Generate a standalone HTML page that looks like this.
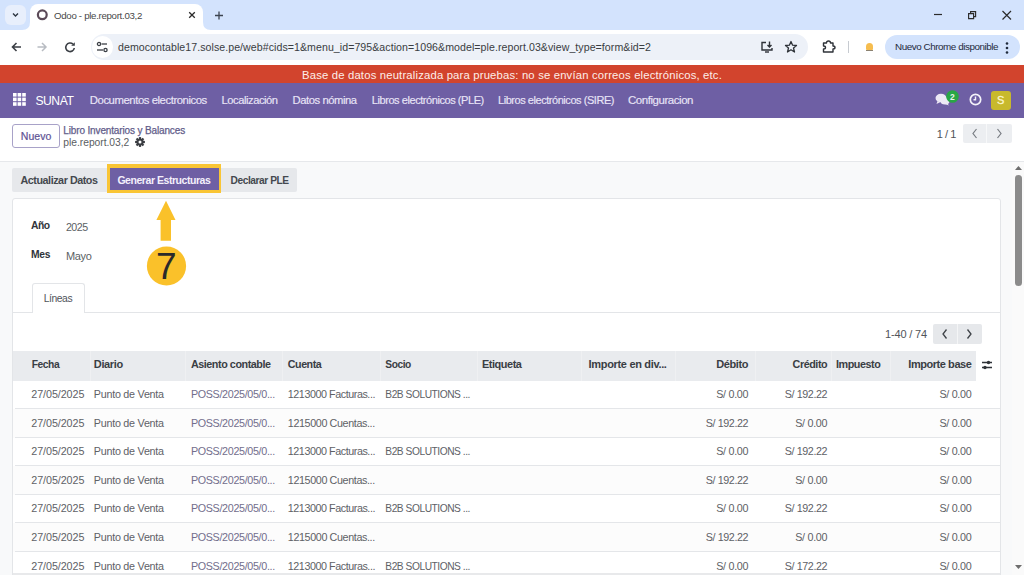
<!DOCTYPE html>
<html><head><meta charset="utf-8"><title>Odoo - ple.report.03,2</title>
<style>
*{margin:0;padding:0;box-sizing:border-box}
html,body{width:1024px;height:575px;overflow:hidden;background:#fff;font-family:"Liberation Sans",sans-serif;position:relative}
.a{position:absolute}
.t{position:absolute;white-space:nowrap}
</style></head><body>
<div class="a" style="left:0px;top:0px;width:1024px;height:30px;background:#d3e3fd;"></div>
<div class="a" style="left:5px;top:5px;width:21px;height:20px;background:#e8effc;border-radius:6px"></div>
<svg class="a" style="left:10px;top:10px" width="11" height="10" viewBox="0 0 11 10"><path d="M3 3.5 L5.5 6 L8 3.5" fill="none" stroke="#2d3540" stroke-width="1.4"/></svg>
<div class="a" style="left:30px;top:4px;width:173px;height:26px;background:#fff;border-radius:8px 8px 0 0"></div>
<svg class="a" style="left:22px;top:22px" width="8" height="8" viewBox="0 0 8 8"><path d="M0 8 Q8 8 8 0 L8 8 Z" fill="#fff"/></svg>
<svg class="a" style="left:203px;top:22px" width="8" height="8" viewBox="0 0 8 8"><path d="M8 8 Q0 8 0 0 L0 8 Z" fill="#fff"/></svg>
<svg class="a" style="left:36px;top:9px" width="13" height="12" viewBox="0 0 13 12"><circle cx="6.3" cy="5.8" r="4.4" fill="none" stroke="#5b4a58" stroke-width="2.2"/></svg>
<svg class="a" style="left:187px;top:10px" width="10" height="10" viewBox="0 0 10 10"><path d="M2.2 2.2 L7.8 7.8 M7.8 2.2 L2.2 7.8" stroke="#2a2a2a" stroke-width="1.3"/></svg>
<svg class="a" style="left:213px;top:10px" width="12" height="11" viewBox="0 0 12 11"><path d="M6 1.5 V9.5 M2 5.5 H10" stroke="#3c4450" stroke-width="1.3"/></svg>
<svg class="a" style="left:932px;top:10px" width="12" height="10" viewBox="0 0 12 10"><path d="M2 4.5 H10" stroke="#2b2b2b" stroke-width="1.2"/></svg>
<svg class="a" style="left:966px;top:9px" width="12" height="12" viewBox="0 0 12 12"><path d="M2.6 4.6 H7.6 V9.6 H2.6 Z M4.6 4.6 V2.6 H9.6 V7.6 H7.6" fill="none" stroke="#2b2b2b" stroke-width="1.15"/></svg>
<svg class="a" style="left:1001px;top:10px" width="12" height="10" viewBox="0 0 12 10"><path d="M1.5 1 L10 9.5 M10 1 L1.5 9.5" stroke="#2b2b2b" stroke-width="1.2"/></svg>
<div class="a" style="left:0px;top:30px;width:1024px;height:34px;background:#fff;"></div>
<svg class="a" style="left:10px;top:41px" width="13" height="12" viewBox="0 0 13 12"><path d="M11 6 H2.5 M6.5 2 L2.5 6 L6.5 10" fill="none" stroke="#3b3f45" stroke-width="1.6"/></svg>
<svg class="a" style="left:36px;top:41px" width="13" height="12" viewBox="0 0 13 12"><path d="M1.5 6 H10 M6 2 L10 6 L6 10" fill="none" stroke="#b8bcc2" stroke-width="1.5"/></svg>
<svg class="a" style="left:64px;top:41px" width="13" height="13" viewBox="0 0 13 13"><path d="M10.3 7 A4.3 4.3 0 1 1 9 3.2" fill="none" stroke="#3b3f45" stroke-width="1.6"/><path d="M10.8 1.2 V4.8 H7.2 Z" fill="#3b3f45"/></svg>
<div class="a" style="left:91px;top:34px;width:717px;height:26px;background:#edf1f8;border-radius:13px"></div>
<div class="a" style="left:92px;top:36px;width:21px;height:22px;background:#fff;border-radius:11px"></div>
<svg class="a" style="left:95px;top:40px" width="15" height="14" viewBox="0 0 15 14"><circle cx="4" cy="4" r="1.6" fill="none" stroke="#3b3f45" stroke-width="1.3"/><path d="M6.5 4 H12" stroke="#3b3f45" stroke-width="1.3"/><circle cx="10.5" cy="10" r="1.6" fill="none" stroke="#3b3f45" stroke-width="1.3"/><path d="M2 10 H8" stroke="#3b3f45" stroke-width="1.3"/></svg>
<svg class="a" style="left:760px;top:40px" width="15" height="14" viewBox="0 0 15 14"><path d="M6 2.5 H2 V10 H12 V8" fill="none" stroke="#2e3238" stroke-width="1.4"/><path d="M9.5 1.5 V7 M7.5 5 L9.5 7 L11.5 5" fill="none" stroke="#2e3238" stroke-width="1.4"/><path d="M5 12 H9" stroke="#2e3238" stroke-width="1.4"/></svg>
<svg class="a" style="left:784px;top:40px" width="14" height="14" viewBox="0 0 14 14"><path d="M7 1.5 L8.6 5.2 L12.5 5.5 L9.5 8 L10.5 12 L7 9.8 L3.5 12 L4.5 8 L1.5 5.5 L5.4 5.2 Z" fill="none" stroke="#2e3238" stroke-width="1.3" stroke-linejoin="round"/></svg>
<svg class="a" style="left:821px;top:40px" width="16" height="14" viewBox="0 0 16 14"><path d="M2.5 3 H5.5 Q5.5 1 7.5 1 Q9.5 1 9.5 3 H12 V6 Q14 6 14 7.5 Q14 9 12 9 V12 H2.5 V9 Q4.5 9 4.5 7.5 Q4.5 6 2.5 6 Z" fill="none" stroke="#2e3238" stroke-width="1.4" stroke-linejoin="round"/></svg>
<div class="a" style="left:848px;top:41px;width:1px;height:12px;background:#c7cbd1;"></div>
<div class="a" style="left:865.5px;top:42.5px;width:7px;height:7px;background:#f6bd4f;border-radius:3.5px 3.5px 1px 1px"></div>
<div class="a" style="left:865.5px;top:50.2px;width:7px;height:1.2px;background:#8c8270;"></div>
<div class="a" style="left:885px;top:35px;width:135px;height:24px;background:#d3e3fd;border-radius:12px"></div>
<svg class="a" style="left:1004px;top:41px" width="6" height="14" viewBox="0 0 6 14"><circle cx="3" cy="2.5" r="1.3" fill="#1f2a3c"/><circle cx="3" cy="7" r="1.3" fill="#1f2a3c"/><circle cx="3" cy="11.5" r="1.3" fill="#1f2a3c"/></svg>
<div class="a" style="left:0px;top:64.5px;width:1024px;height:18.7px;background:#d2442d;"></div>
<div class="a" style="left:0px;top:83px;width:1024px;height:35px;background:#6e5fa4;"></div>
<svg class="a" style="left:13px;top:93px" width="14" height="14" viewBox="0 0 14 14"><rect x="0.0" y="0.0" width="3.6" height="3.6" fill="#fff"/><rect x="0.0" y="4.6" width="3.6" height="3.6" fill="#fff"/><rect x="0.0" y="9.2" width="3.6" height="3.6" fill="#fff"/><rect x="4.6" y="0.0" width="3.6" height="3.6" fill="#fff"/><rect x="4.6" y="4.6" width="3.6" height="3.6" fill="#fff"/><rect x="4.6" y="9.2" width="3.6" height="3.6" fill="#fff"/><rect x="9.2" y="0.0" width="3.6" height="3.6" fill="#fff"/><rect x="9.2" y="4.6" width="3.6" height="3.6" fill="#fff"/><rect x="9.2" y="9.2" width="3.6" height="3.6" fill="#fff"/></svg>
<svg class="a" style="left:935px;top:93px" width="16" height="13" viewBox="0 0 16 13"><ellipse cx="6" cy="5" rx="5.5" ry="4.3" fill="#ece9f5"/><path d="M2.5 8 L1.5 11 L5.5 9 Z" fill="#ece9f5"/><ellipse cx="10" cy="8" rx="4.5" ry="3.5" fill="#ece9f5"/><path d="M12.5 10.5 L14 12.5 L10 11 Z" fill="#ece9f5"/></svg>
<svg class="a" style="left:946px;top:90px" width="13" height="13" viewBox="0 0 13 13"><circle cx="6.5" cy="6.5" r="6.3" fill="#28a745"/></svg>
<svg class="a" style="left:969px;top:93px" width="13" height="13" viewBox="0 0 13 13"><circle cx="6.5" cy="6.5" r="5.2" fill="none" stroke="#f4f2fa" stroke-width="1.7"/><path d="M6.5 3.5 V6.8 H4.5" fill="none" stroke="#f4f2fa" stroke-width="1.4"/></svg>
<div class="a" style="left:991px;top:90.5px;width:19.5px;height:19.5px;background:#c8b92c;border-radius:3px"></div>
<div class="a" style="left:0px;top:118px;width:1024px;height:43px;background:#fff;"></div>
<div class="a" style="left:0px;top:161px;width:1024px;height:1px;background:#e6e8eb;"></div>
<div class="a" style="left:12px;top:124px;width:48px;height:24px;background:#fff;border:1px solid #a8a2c8;border-radius:3px"></div>
<svg class="a" style="left:135px;top:137.3px" width="10" height="10" viewBox="0 0 10 10"><g transform="translate(5 5)"><rect x="-1.1" y="-4.9" width="2.2" height="9.8" fill="#3a3d42" transform="rotate(0)"/><rect x="-1.1" y="-4.9" width="2.2" height="9.8" fill="#3a3d42" transform="rotate(45)"/><rect x="-1.1" y="-4.9" width="2.2" height="9.8" fill="#3a3d42" transform="rotate(90)"/><rect x="-1.1" y="-4.9" width="2.2" height="9.8" fill="#3a3d42" transform="rotate(135)"/><circle r="3.6" fill="#3a3d42"/><circle r="1.5" fill="#fff"/></g></svg>
<div class="a" style="left:963px;top:124px;width:48.5px;height:18.5px;background:#eceef1;border-radius:2px"></div>
<div class="a" style="left:986px;top:124px;width:1px;height:18.5px;background:#f7f8f9;"></div>
<svg class="a" style="left:970px;top:127px" width="10" height="13" viewBox="0 0 10 13"><path d="M6.5 2 L3 6.5 L6.5 11" fill="none" stroke="#767a80" stroke-width="1.2"/></svg>
<svg class="a" style="left:994px;top:127px" width="10" height="13" viewBox="0 0 10 13"><path d="M3.5 2 L7 6.5 L3.5 11" fill="none" stroke="#767a80" stroke-width="1.2"/></svg>
<div class="a" style="left:0px;top:162px;width:1012px;height:413px;background:#f8f9fa;"></div>
<div class="a" style="left:12px;top:168px;width:95px;height:24px;background:#e6e8eb;border-radius:2px 0 0 2px"></div>
<div class="a" style="left:107px;top:164px;width:114px;height:29px;background:#f9c535;"></div>
<div class="a" style="left:110px;top:167.5px;width:108.5px;height:22.5px;background:#6e5fa4;"></div>
<div class="a" style="left:221px;top:168px;width:76px;height:24px;background:#e6e8eb;border-radius:0 2px 2px 0"></div>
<div class="a" style="left:12px;top:198px;width:989px;height:400px;background:#fff;border:1px solid #e3e5e8;border-radius:3px"></div>
<div class="a" style="left:13px;top:311.5px;width:987px;height:1px;background:#e3e5e8;"></div>
<div class="a" style="left:32px;top:283px;width:53px;height:29.5px;background:#fff;border:1px solid #e3e5e8;border-bottom:none;border-radius:3px 3px 0 0"></div>
<svg class="a" style="left:146px;top:199px" width="42" height="88" viewBox="0 0 42 88"><path d="M20 1.8 L29.5 21 L25 21 L25 41.8 L14.6 41.8 L14.6 21 L10.4 21 Z" fill="#fac12a"/><circle cx="20.5" cy="67" r="19.6" fill="#fac12a"/></svg>
<div class="a" style="left:933px;top:324px;width:48.5px;height:19.5px;background:#e6e8eb;border-radius:2px"></div>
<div class="a" style="left:957px;top:324px;width:1px;height:19.5px;background:#f4f5f6;"></div>
<svg class="a" style="left:940px;top:327px" width="10" height="14" viewBox="0 0 10 14"><path d="M6.5 2.5 L3 7 L6.5 11.5" fill="none" stroke="#3e4247" stroke-width="1.3"/></svg>
<svg class="a" style="left:964px;top:327px" width="10" height="14" viewBox="0 0 10 14"><path d="M3.5 2.5 L7 7 L3.5 11.5" fill="none" stroke="#3e4247" stroke-width="1.3"/></svg>
<div class="a" style="left:13px;top:350.5px;width:963px;height:30px;background:#e9ebee;"></div>
<div class="a" style="left:89.5px;top:350.5px;width:1px;height:30px;background:#eff0f2;"></div>
<div class="a" style="left:185px;top:350.5px;width:1px;height:30px;background:#eff0f2;"></div>
<div class="a" style="left:282px;top:350.5px;width:1px;height:30px;background:#eff0f2;"></div>
<div class="a" style="left:380px;top:350.5px;width:1px;height:30px;background:#eff0f2;"></div>
<div class="a" style="left:477px;top:350.5px;width:1px;height:30px;background:#eff0f2;"></div>
<div class="a" style="left:581px;top:350.5px;width:1px;height:30px;background:#eff0f2;"></div>
<div class="a" style="left:675px;top:350.5px;width:1px;height:30px;background:#eff0f2;"></div>
<div class="a" style="left:755px;top:350.5px;width:1px;height:30px;background:#eff0f2;"></div>
<div class="a" style="left:831px;top:350.5px;width:1px;height:30px;background:#eff0f2;"></div>
<div class="a" style="left:890px;top:350.5px;width:1px;height:30px;background:#eff0f2;"></div>
<div class="a" style="left:976px;top:350.5px;width:24px;height:30px;background:#fff;"></div>
<svg class="a" style="left:980px;top:358px" width="14" height="14" viewBox="0 0 14 14"><path d="M2 4.5 H12 M2 9.5 H12" stroke="#2f3338" stroke-width="1.3"/><circle cx="8.5" cy="4.5" r="1.7" fill="#2f3338"/><circle cx="5" cy="9.5" r="1.7" fill="#2f3338"/></svg>
<div class="a" style="left:13px;top:380.5px;width:987px;height:28.55px;background:#fff;"></div>
<div class="a" style="left:13px;top:409.05px;width:987px;height:28.55px;background:#fcfcfc;"></div>
<div class="a" style="left:13px;top:437.6px;width:987px;height:28.55px;background:#fff;"></div>
<div class="a" style="left:13px;top:466.15px;width:987px;height:28.55px;background:#fcfcfc;"></div>
<div class="a" style="left:13px;top:494.7px;width:987px;height:28.55px;background:#fff;"></div>
<div class="a" style="left:13px;top:523.25px;width:987px;height:28.55px;background:#fcfcfc;"></div>
<div class="a" style="left:13px;top:551.8px;width:987px;height:28.55px;background:#fff;"></div>
<div class="a" style="left:14.5px;top:408.05px;width:985.5px;height:1px;background:#e4e6e9;"></div>
<div class="a" style="left:14.5px;top:436.6px;width:985.5px;height:1px;background:#e4e6e9;"></div>
<div class="a" style="left:14.5px;top:465.15px;width:985.5px;height:1px;background:#e4e6e9;"></div>
<div class="a" style="left:14.5px;top:493.7px;width:985.5px;height:1px;background:#e4e6e9;"></div>
<div class="a" style="left:14.5px;top:522.25px;width:985.5px;height:1px;background:#e4e6e9;"></div>
<div class="a" style="left:14.5px;top:550.8px;width:985.5px;height:1px;background:#e4e6e9;"></div>
<div class="a" style="left:14.5px;top:579.35px;width:985.5px;height:1px;background:#e4e6e9;"></div>
<div class="a" style="left:13px;top:573px;width:987px;height:2px;background:#e8e9eb;"></div>
<div class="a" style="left:1012px;top:162px;width:12px;height:413px;background:#fafafa;"></div>
<svg class="a" style="left:1013px;top:164px" width="10" height="8" viewBox="0 0 10 8"><path d="M5.5 2 L9 6 H2 Z" fill="#6e6e6e"/></svg>
<div class="a" style="left:1015px;top:175px;width:7px;height:111px;background:#8b8b8b;border-radius:3.5px"></div>
<svg class="a" style="left:1013px;top:563px" width="10" height="8" viewBox="0 0 10 8"><path d="M5.5 6 L9 2 H2 Z" fill="#6e6e6e"/></svg>
<div class="t" style="left:54.00px;top:11.00px;font-size:9.7px;line-height:9.7px;color:#474747;letter-spacing:-0.308px;">Odoo - ple.report.03,2</div>
<div class="t" style="left:118.00px;top:42.00px;font-size:10.6px;line-height:10.6px;color:#3a3d42;letter-spacing:0.06px;">democontable17.solse.pe/web#cids=1&amp;menu_id=795&amp;action=1096&amp;model=ple.report.03&amp;view_type=form&amp;id=2</div>
<div class="t" style="left:895.00px;top:42.00px;font-size:9.85px;line-height:9.85px;color:#1f2a3c;letter-spacing:-0.446px;">Nuevo Chrome disponible</div>
<div class="t" style="left:302.00px;top:70.00px;font-size:11.3px;line-height:11.3px;color:#fdeee9;letter-spacing:0.171px;">Base de datos neutralizada para pruebas: no se envían correos electrónicos, etc.</div>
<div class="t" style="left:35.40px;top:95.00px;font-size:12.14px;line-height:12.14px;color:#ffffff;letter-spacing:-0.439px;">SUNAT</div>
<div class="t" style="left:89.80px;top:95.00px;font-size:11.34px;line-height:11.34px;color:#e9e5f7;letter-spacing:-0.443px;-webkit-text-stroke:0.15px #e9e5f7;">Documentos electronicos</div>
<div class="t" style="left:221.60px;top:95.00px;font-size:11.16px;line-height:11.16px;color:#e9e5f7;letter-spacing:-0.45px;-webkit-text-stroke:0.15px #e9e5f7;">Localización</div>
<div class="t" style="left:292.60px;top:95.00px;font-size:11.25px;line-height:11.25px;color:#e9e5f7;letter-spacing:-0.451px;-webkit-text-stroke:0.15px #e9e5f7;">Datos nómina</div>
<div class="t" style="left:371.80px;top:95.00px;font-size:11.03px;line-height:11.03px;color:#e9e5f7;letter-spacing:-0.442px;-webkit-text-stroke:0.15px #e9e5f7;">Libros electrónicos (PLE)</div>
<div class="t" style="left:498.00px;top:95.00px;font-size:10.99px;line-height:10.99px;color:#e9e5f7;letter-spacing:-0.446px;-webkit-text-stroke:0.15px #e9e5f7;">Libros electrónicos (SIRE)</div>
<div class="t" style="left:628.00px;top:95.00px;font-size:11.48px;line-height:11.48px;color:#e9e5f7;letter-spacing:-0.444px;-webkit-text-stroke:0.15px #e9e5f7;">Configuracion</div>
<div class="t" style="left:949.94px;top:93.00px;font-size:8.5px;line-height:8.5px;color:#e8f5e9;font-weight:bold;">2</div>
<div class="t" style="left:997.03px;top:95.00px;font-size:11px;line-height:11px;color:#fbf6d0;-webkit-text-stroke:0.3px #fbf6d0;">S</div>
<div class="t" style="left:20.80px;top:131.00px;font-size:10.5px;line-height:10.5px;color:#5d5294;letter-spacing:0.03px;-webkit-text-stroke:0.2px #5d5294;">Nuevo</div>
<div class="t" style="left:63.30px;top:126.00px;font-size:10px;line-height:10px;color:#625d8a;letter-spacing:-0.14px;-webkit-text-stroke:0.25px #625d8a;">Libro Inventarios y Balances</div>
<div class="t" style="left:63.30px;top:138.00px;font-size:10.3px;line-height:10.3px;color:#5a5d62;letter-spacing:-0.027px;">ple.report.03,2</div>
<div class="t" style="left:936.80px;top:129.00px;font-size:11px;line-height:11px;color:#4f5358;letter-spacing:-0.441px;">1 / 1</div>
<div class="t" style="left:20.50px;top:175.00px;font-size:10.75px;line-height:10.75px;color:#44484e;font-weight:bold;letter-spacing:-0.452px;">Actualizar Datos</div>
<div class="t" style="left:117.40px;top:175.00px;font-size:10.5px;line-height:10.5px;color:#f3f0fb;font-weight:bold;letter-spacing:-0.45px;">Generar Estructuras</div>
<div class="t" style="left:230.60px;top:176.00px;font-size:10.18px;line-height:10.18px;color:#44484e;font-weight:bold;letter-spacing:-0.444px;">Declarar PLE</div>
<div class="t" style="left:31.00px;top:221.00px;font-size:10.3px;line-height:10.3px;color:#30343a;font-weight:bold;letter-spacing:-0.439px;">Año</div>
<div class="t" style="left:65.90px;top:222.00px;font-size:10.65px;line-height:10.65px;color:#5b5f64;letter-spacing:-0.443px;">2025</div>
<div class="t" style="left:31.00px;top:250.00px;font-size:10.3px;line-height:10.3px;color:#30343a;font-weight:bold;letter-spacing:-0.244px;">Mes</div>
<div class="t" style="left:66.00px;top:251.00px;font-size:11px;line-height:11px;color:#5b5f64;letter-spacing:-0.35px;">Mayo</div>
<div class="t" style="left:43.80px;top:294.00px;font-size:10.32px;line-height:10.32px;color:#50545a;letter-spacing:-0.444px;">Líneas</div>
<div class="t" style="left:155.91px;top:248.00px;font-size:37px;line-height:37px;color:#2a2a2a;">7</div>
<div class="t" style="left:885.00px;top:329.00px;font-size:11px;line-height:11px;color:#50545a;letter-spacing:-0.158px;">1-40 / 74</div>
<div class="t" style="left:31.70px;top:360.00px;font-size:10.29px;line-height:10.29px;color:#3a3e44;font-weight:bold;letter-spacing:-0.443px;">Fecha</div>
<div class="t" style="left:93.80px;top:359.00px;font-size:11px;line-height:11px;color:#3a3e44;font-weight:bold;letter-spacing:-0.362px;">Diario</div>
<div class="t" style="left:190.90px;top:359.00px;font-size:10.79px;line-height:10.79px;color:#3a3e44;font-weight:bold;letter-spacing:-0.448px;">Asiento contable</div>
<div class="t" style="left:287.80px;top:359.00px;font-size:10.68px;line-height:10.68px;color:#3a3e44;font-weight:bold;letter-spacing:-0.445px;">Cuenta</div>
<div class="t" style="left:385.30px;top:360.00px;font-size:10.19px;line-height:10.19px;color:#3a3e44;font-weight:bold;letter-spacing:-0.439px;">Socio</div>
<div class="t" style="left:482.00px;top:359.00px;font-size:10.93px;line-height:10.93px;color:#3a3e44;font-weight:bold;letter-spacing:-0.448px;">Etiqueta</div>
<div class="t" style="left:588.60px;top:359.00px;font-size:11px;line-height:11px;color:#3a3e44;font-weight:bold;letter-spacing:-0.325px;">Importe en div...</div>
<div class="t" style="left:716.20px;top:359.00px;font-size:11px;line-height:11px;color:#3a3e44;font-weight:bold;letter-spacing:-0.37px;">Débito</div>
<div class="t" style="left:792.60px;top:359.00px;font-size:10.79px;line-height:10.79px;color:#3a3e44;font-weight:bold;letter-spacing:-0.448px;">Crédito</div>
<div class="t" style="left:836.00px;top:359.00px;font-size:10.8px;line-height:10.8px;color:#3a3e44;font-weight:bold;letter-spacing:-0.449px;">Impuesto</div>
<div class="t" style="left:908.30px;top:359.00px;font-size:11px;line-height:11px;color:#3a3e44;font-weight:bold;letter-spacing:-0.447px;">Importe base</div>
<div class="t" style="left:31.30px;top:389.00px;font-size:10.75px;line-height:10.75px;color:#5e6166;letter-spacing:-0.08px;">27/05/2025</div>
<div class="t" style="left:93.80px;top:389.00px;font-size:10.75px;line-height:10.75px;color:#5e6166;letter-spacing:-0.252px;">Punto de Venta</div>
<div class="t" style="left:190.90px;top:389.00px;font-size:10.75px;line-height:10.75px;color:#726e8c;letter-spacing:-0.332px;">POSS/2025/05/0...</div>
<div class="t" style="left:287.80px;top:389.00px;font-size:10.75px;line-height:10.75px;color:#5e6166;letter-spacing:-0.443px;">1213000 Facturas...</div>
<div class="t" style="left:385.30px;top:390.00px;font-size:10.2px;line-height:10.2px;color:#5e6166;letter-spacing:-0.446px;">B2B SOLUTIONS ...</div>
<div class="t" style="left:716.20px;top:389.00px;font-size:10.75px;line-height:10.75px;color:#5e6166;letter-spacing:-0.295px;">S/ 0.00</div>
<div class="t" style="left:784.70px;top:389.00px;font-size:10.75px;line-height:10.75px;color:#5e6166;letter-spacing:-0.391px;">S/ 192.22</div>
<div class="t" style="left:939.40px;top:389.00px;font-size:10.75px;line-height:10.75px;color:#5e6166;letter-spacing:-0.295px;">S/ 0.00</div>
<div class="t" style="left:31.30px;top:418.00px;font-size:10.75px;line-height:10.75px;color:#5e6166;letter-spacing:-0.08px;">27/05/2025</div>
<div class="t" style="left:93.80px;top:418.00px;font-size:10.75px;line-height:10.75px;color:#5e6166;letter-spacing:-0.252px;">Punto de Venta</div>
<div class="t" style="left:190.90px;top:418.00px;font-size:10.75px;line-height:10.75px;color:#726e8c;letter-spacing:-0.332px;">POSS/2025/05/0...</div>
<div class="t" style="left:287.80px;top:418.00px;font-size:10.75px;line-height:10.75px;color:#5e6166;letter-spacing:-0.38px;">1215000 Cuentas...</div>
<div class="t" style="left:705.70px;top:418.00px;font-size:10.75px;line-height:10.75px;color:#5e6166;letter-spacing:-0.391px;">S/ 192.22</div>
<div class="t" style="left:795.20px;top:418.00px;font-size:10.75px;line-height:10.75px;color:#5e6166;letter-spacing:-0.295px;">S/ 0.00</div>
<div class="t" style="left:939.40px;top:418.00px;font-size:10.75px;line-height:10.75px;color:#5e6166;letter-spacing:-0.295px;">S/ 0.00</div>
<div class="t" style="left:31.30px;top:446.00px;font-size:10.75px;line-height:10.75px;color:#5e6166;letter-spacing:-0.08px;">27/05/2025</div>
<div class="t" style="left:93.80px;top:446.00px;font-size:10.75px;line-height:10.75px;color:#5e6166;letter-spacing:-0.252px;">Punto de Venta</div>
<div class="t" style="left:190.90px;top:446.00px;font-size:10.75px;line-height:10.75px;color:#726e8c;letter-spacing:-0.332px;">POSS/2025/05/0...</div>
<div class="t" style="left:287.80px;top:446.00px;font-size:10.75px;line-height:10.75px;color:#5e6166;letter-spacing:-0.443px;">1213000 Facturas...</div>
<div class="t" style="left:385.30px;top:447.00px;font-size:10.2px;line-height:10.2px;color:#5e6166;letter-spacing:-0.446px;">B2B SOLUTIONS ...</div>
<div class="t" style="left:716.20px;top:446.00px;font-size:10.75px;line-height:10.75px;color:#5e6166;letter-spacing:-0.295px;">S/ 0.00</div>
<div class="t" style="left:784.70px;top:446.00px;font-size:10.75px;line-height:10.75px;color:#5e6166;letter-spacing:-0.391px;">S/ 192.22</div>
<div class="t" style="left:939.40px;top:446.00px;font-size:10.75px;line-height:10.75px;color:#5e6166;letter-spacing:-0.295px;">S/ 0.00</div>
<div class="t" style="left:31.30px;top:475.00px;font-size:10.75px;line-height:10.75px;color:#5e6166;letter-spacing:-0.08px;">27/05/2025</div>
<div class="t" style="left:93.80px;top:475.00px;font-size:10.75px;line-height:10.75px;color:#5e6166;letter-spacing:-0.252px;">Punto de Venta</div>
<div class="t" style="left:190.90px;top:475.00px;font-size:10.75px;line-height:10.75px;color:#726e8c;letter-spacing:-0.332px;">POSS/2025/05/0...</div>
<div class="t" style="left:287.80px;top:475.00px;font-size:10.75px;line-height:10.75px;color:#5e6166;letter-spacing:-0.38px;">1215000 Cuentas...</div>
<div class="t" style="left:705.70px;top:475.00px;font-size:10.75px;line-height:10.75px;color:#5e6166;letter-spacing:-0.391px;">S/ 192.22</div>
<div class="t" style="left:795.20px;top:475.00px;font-size:10.75px;line-height:10.75px;color:#5e6166;letter-spacing:-0.295px;">S/ 0.00</div>
<div class="t" style="left:939.40px;top:475.00px;font-size:10.75px;line-height:10.75px;color:#5e6166;letter-spacing:-0.295px;">S/ 0.00</div>
<div class="t" style="left:31.30px;top:503.00px;font-size:10.75px;line-height:10.75px;color:#5e6166;letter-spacing:-0.08px;">27/05/2025</div>
<div class="t" style="left:93.80px;top:503.00px;font-size:10.75px;line-height:10.75px;color:#5e6166;letter-spacing:-0.252px;">Punto de Venta</div>
<div class="t" style="left:190.90px;top:503.00px;font-size:10.75px;line-height:10.75px;color:#726e8c;letter-spacing:-0.332px;">POSS/2025/05/0...</div>
<div class="t" style="left:287.80px;top:503.00px;font-size:10.75px;line-height:10.75px;color:#5e6166;letter-spacing:-0.443px;">1213000 Facturas...</div>
<div class="t" style="left:385.30px;top:504.00px;font-size:10.2px;line-height:10.2px;color:#5e6166;letter-spacing:-0.446px;">B2B SOLUTIONS ...</div>
<div class="t" style="left:716.20px;top:503.00px;font-size:10.75px;line-height:10.75px;color:#5e6166;letter-spacing:-0.295px;">S/ 0.00</div>
<div class="t" style="left:784.70px;top:503.00px;font-size:10.75px;line-height:10.75px;color:#5e6166;letter-spacing:-0.391px;">S/ 192.22</div>
<div class="t" style="left:939.40px;top:503.00px;font-size:10.75px;line-height:10.75px;color:#5e6166;letter-spacing:-0.295px;">S/ 0.00</div>
<div class="t" style="left:31.30px;top:532.00px;font-size:10.75px;line-height:10.75px;color:#5e6166;letter-spacing:-0.08px;">27/05/2025</div>
<div class="t" style="left:93.80px;top:532.00px;font-size:10.75px;line-height:10.75px;color:#5e6166;letter-spacing:-0.252px;">Punto de Venta</div>
<div class="t" style="left:190.90px;top:532.00px;font-size:10.75px;line-height:10.75px;color:#726e8c;letter-spacing:-0.332px;">POSS/2025/05/0...</div>
<div class="t" style="left:287.80px;top:532.00px;font-size:10.75px;line-height:10.75px;color:#5e6166;letter-spacing:-0.38px;">1215000 Cuentas...</div>
<div class="t" style="left:705.70px;top:532.00px;font-size:10.75px;line-height:10.75px;color:#5e6166;letter-spacing:-0.391px;">S/ 192.22</div>
<div class="t" style="left:795.20px;top:532.00px;font-size:10.75px;line-height:10.75px;color:#5e6166;letter-spacing:-0.295px;">S/ 0.00</div>
<div class="t" style="left:939.40px;top:532.00px;font-size:10.75px;line-height:10.75px;color:#5e6166;letter-spacing:-0.295px;">S/ 0.00</div>
<div class="t" style="left:31.30px;top:561.00px;font-size:10.75px;line-height:10.75px;color:#5e6166;letter-spacing:-0.08px;">27/05/2025</div>
<div class="t" style="left:93.80px;top:561.00px;font-size:10.75px;line-height:10.75px;color:#5e6166;letter-spacing:-0.252px;">Punto de Venta</div>
<div class="t" style="left:190.90px;top:561.00px;font-size:10.75px;line-height:10.75px;color:#726e8c;letter-spacing:-0.332px;">POSS/2025/05/0...</div>
<div class="t" style="left:287.80px;top:561.00px;font-size:10.75px;line-height:10.75px;color:#5e6166;letter-spacing:-0.443px;">1213000 Facturas...</div>
<div class="t" style="left:385.30px;top:562.00px;font-size:10.2px;line-height:10.2px;color:#5e6166;letter-spacing:-0.446px;">B2B SOLUTIONS ...</div>
<div class="t" style="left:716.20px;top:561.00px;font-size:10.75px;line-height:10.75px;color:#5e6166;letter-spacing:-0.295px;">S/ 0.00</div>
<div class="t" style="left:784.70px;top:561.00px;font-size:10.75px;line-height:10.75px;color:#5e6166;letter-spacing:-0.391px;">S/ 172.22</div>
<div class="t" style="left:939.40px;top:561.00px;font-size:10.75px;line-height:10.75px;color:#5e6166;letter-spacing:-0.295px;">S/ 0.00</div>

</body></html>
